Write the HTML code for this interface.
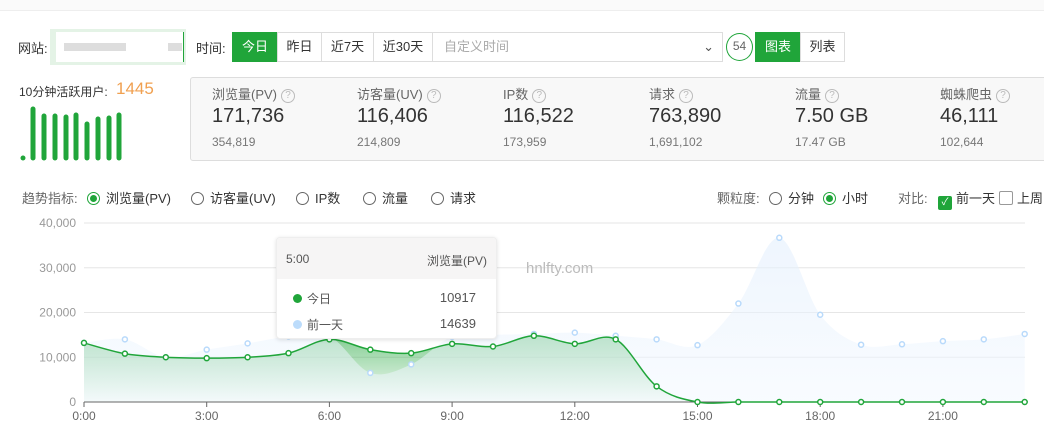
<!DOCTYPE html>
<html><head><meta charset="utf-8"><style>
*{margin:0;padding:0;box-sizing:border-box}
body{width:1044px;height:429px;overflow:hidden;background:#fff;font-family:"Liberation Sans","Noto Sans CJK SC",sans-serif;color:#333;position:relative;font-size:12px}
.a{position:absolute;white-space:nowrap}
.topline{position:absolute;left:0;top:0;width:1044px;height:11px;border-bottom:1px solid #eee;background:#fafafa}
.btn{position:absolute;top:32px;height:30px;border:1px solid #ddd;line-height:28px;text-align:center;font-size:13px;background:#fff}
.g{background:#20a53a;color:#fff;border-color:#20a53a}
.box{position:absolute;left:190px;top:77px;width:860px;height:84px;background:#f8f8f8;border:1px solid #ddd;border-radius:3px}
.st{position:absolute;top:0}
.st .t{position:absolute;top:6px;font-size:13px;color:#666;white-space:nowrap}
.st .v{position:absolute;top:27px;font-size:20px;color:#333;white-space:nowrap}
.st .s{position:absolute;top:57px;font-size:12px;color:#777;white-space:nowrap}
.q{display:inline-block;width:14px;height:14px;border:1px solid #bbb;border-radius:50%;font-size:10px;line-height:12px;text-align:center;color:#bbb;margin-left:4px;vertical-align:1px}
.r{display:inline-block;width:13px;height:13px;border:1px solid #666;border-radius:50%;vertical-align:-2px;margin-right:6px;position:relative}
.r.on{border-color:#20a53a}.r.on:after{content:"";position:absolute;left:2px;top:2px;width:7px;height:7px;border-radius:50%;background:#20a53a}
</style></head><body>
<div class="topline"></div>
<div class="a" style="left:18px;top:38px;font-size:13px">网站:</div>
<div class="a" style="left:50px;top:29px;width:136px;height:36px;background:#e4f3e6"></div>
<div class="a" style="left:56px;top:32px;width:128px;height:30px;background:#fff;border-right:1px solid #20a53a"></div>
<div class="a" style="left:64px;top:43px;width:62px;height:8px;background:#ddd"></div>
<div class="a" style="left:168px;top:43px;width:14px;height:8px;background:#ddd"></div>
<div class="a" style="left:196px;top:38px;font-size:13px">时间:</div>
<div class="btn g" style="left:232px;width:46px">今日</div>
<div class="btn" style="left:277px;width:45px">昨日</div>
<div class="btn" style="left:321px;width:53px">近7天</div>
<div class="btn" style="left:373px;width:60px">近30天</div>
<div class="btn" style="left:432px;width:291px;text-align:left;padding-left:11px;color:#aaa">自定义时间<span style="position:absolute;right:8px;top:0;color:#555">&#8964;</span></div>
<div class="a" style="left:726px;top:33px;width:27px;height:28px;border:1.5px solid #20a53a;border-radius:50%;text-align:center;line-height:25px;color:#666;font-size:12px">54</div>
<div class="btn g" style="left:755px;width:46px">图表</div>
<div class="btn" style="left:800px;width:45px">列表</div>

<div class="a" style="left:19px;top:83px;font-size:12px">10分钟活跃用户:</div>
<div class="a" style="left:116px;top:79px;font-size:17px;color:#f0a050">1445</div>
<svg class="a" style="left:18px;top:105px" width="110" height="60">
<g stroke="#20a53a" stroke-width="5" stroke-linecap="round">
<line x1="5" y1="53" x2="5" y2="53"/><line x1="15" y1="4" x2="15" y2="53"/><line x1="26" y1="11" x2="26" y2="53"/><line x1="37" y1="11" x2="37" y2="53"/><line x1="48" y1="12" x2="48" y2="53"/><line x1="58" y1="10" x2="58" y2="53"/><line x1="69" y1="19" x2="69" y2="53"/><line x1="80" y1="14" x2="80" y2="53"/><line x1="91" y1="13" x2="91" y2="53"/><line x1="101" y1="10" x2="101" y2="53"/>
</g></svg>

<div class="box">
<div class="st" style="left:21px"><div class="t">浏览量(PV)<span class="q">?</span></div><div class="v">171,736</div><div class="s">354,819</div></div>
<div class="st" style="left:166px"><div class="t">访客量(UV)<span class="q">?</span></div><div class="v">116,406</div><div class="s">214,809</div></div>
<div class="st" style="left:312px"><div class="t">IP数<span class="q">?</span></div><div class="v">116,522</div><div class="s">173,959</div></div>
<div class="st" style="left:458px"><div class="t">请求<span class="q">?</span></div><div class="v">763,890</div><div class="s">1,691,102</div></div>
<div class="st" style="left:604px"><div class="t">流量<span class="q">?</span></div><div class="v">7.50 GB</div><div class="s">17.47 GB</div></div>
<div class="st" style="left:749px"><div class="t">蜘蛛爬虫<span class="q">?</span></div><div class="v">46,111</div><div class="s">102,644</div></div>
</div>

<div class="a" style="left:22px;top:188px;color:#666;font-size:13px">趋势指标:</div>
<div class="a" style="left:87px;top:188px;font-size:13px"><span class="r on"></span>浏览量(PV)</div>
<div class="a" style="left:191px;top:188px;font-size:13px"><span class="r"></span>访客量(UV)</div>
<div class="a" style="left:296px;top:188px;font-size:13px"><span class="r"></span>IP数</div>
<div class="a" style="left:363px;top:188px;font-size:13px"><span class="r"></span>流量</div>
<div class="a" style="left:431px;top:188px;font-size:13px"><span class="r"></span>请求</div>
<div class="a" style="left:717px;top:188px;color:#666;font-size:13px">颗粒度:</div>
<div class="a" style="left:769px;top:188px;font-size:13px"><span class="r"></span>分钟</div>
<div class="a" style="left:823px;top:188px;font-size:13px"><span class="r on"></span>小时</div>
<div class="a" style="left:898px;top:188px;color:#666;font-size:13px">对比:</div>
<div class="a" style="left:938px;top:188px;font-size:13px"><span style="display:inline-block;width:14px;height:14px;background:#20a53a;border-radius:2px;color:#fff;font-size:10px;line-height:14px;text-align:center;vertical-align:-2px;margin-right:4px;position:relative;top:0">✓</span>前一天<span style="display:inline-block;width:14px;height:14px;border:1px solid #999;border-radius:2px;vertical-align:-2px;margin:0 4px"></span>上周同</div>

<svg id="ch" class="a" style="left:0;top:205px" width="1044" height="224"></svg>

<div class="a" style="left:526px;top:260px;font-size:15px;color:#bbb">hnlfty.com</div>
<div class="a" style="left:276px;top:237px;width:221px;height:102px;background:#fff;border:1px solid #eee;border-radius:4px;box-shadow:0 1px 4px rgba(0,0,0,.12);overflow:hidden">
<div style="height:41px;background:#f6f5f5;position:relative;font-size:12px;color:#555"><span style="position:absolute;left:9px;top:14px">5:00</span><span style="position:absolute;right:9px;top:14px">浏览量(PV)</span></div>
<div style="position:absolute;left:16px;top:52px;font-size:12px;color:#555"><span style="display:inline-block;width:9px;height:9px;border-radius:50%;background:#20a53a;margin-right:5px"></span>今日</div>
<div style="position:absolute;right:20px;top:52px;color:#555;font-size:13px">10917</div>
<div style="position:absolute;left:16px;top:78px;font-size:12px;color:#555"><span style="display:inline-block;width:9px;height:9px;border-radius:50%;background:#bcdcfb;margin-right:5px"></span>前一天</div>
<div style="position:absolute;right:20px;top:78px;color:#555;font-size:13px">14639</div>
</div>

<script>
var T=[13200,10800,10000,9800,10000,10917,14000,11700,10917,13000,12400,14800,13000,14000,3500,0,0,0,0,0,0,0,0,0];
var Y=[13200,14000,10000,11700,13100,14639,14700,6500,8400,14600,15000,15200,15500,14800,14000,12700,22000,36700,19500,12800,12900,13600,14000,15200];
var O=205;function X(i){return 84+i*40.9}function V(v){return 402-O-v*0.004475}
function path(a){var p=a.map(function(v,i){return[X(i),V(v)]});var d="M"+p[0];for(var i=0;i<p.length-1;i++){var p0=p[i-1]||p[i],p1=p[i],p2=p[i+1],p3=p[i+2]||p2;var c1=[p1[0]+(p2[0]-p0[0])/6,p1[1]+(p2[1]-p0[1])/6],c2=[p2[0]-(p3[0]-p1[0])/6,p2[1]-(p3[1]-p1[1])/6];d+="C"+c1+" "+c2+" "+p2}return d}
var s='<defs><linearGradient id="gg" x1="0" y1="0" x2="0" y2="1"><stop offset="0" stop-color="#20a53a" stop-opacity=".55"/><stop offset="1" stop-color="#20a53a" stop-opacity=".03"/></linearGradient><linearGradient id="bb" x1="0" y1="0" x2="0" y2="1"><stop offset="0" stop-color="#e3effd" stop-opacity=".6"/><stop offset="1" stop-color="#f2f8ff" stop-opacity=".5"/></linearGradient></defs>';
[0,10000,20000,30000,40000].forEach(function(v,k){var y=V(v);if(v)s+='<line x1="84" x2="1025" y1="'+y+'" y2="'+y+'" stroke="#e6e6e6"/>';s+='<text x="76" y="'+(y+4)+'" text-anchor="end" font-size="12" fill="#999">'+(v?(v/1000)+',000':'0')+'</text>'});
var b=V(0);
s+='<path d="'+path(T)+'L'+X(23)+','+b+'L84,'+b+'Z" fill="url(#gg)"/>';
s+='<path d="'+path(Y)+'L'+X(23)+','+b+'L84,'+b+'Z" fill="url(#bb)"/>';
s+='<line x1="84" x2="1026" y1="'+b+'" y2="'+b+'" stroke="#666"/>';
for(var h=0;h<24;h+=3){s+='<line x1="'+X(h)+'" x2="'+X(h)+'" y1="'+b+'" y2="'+(b+5)+'" stroke="#666"/><text x="'+X(h)+'" y="'+(b+18)+'" text-anchor="middle" font-size="12" fill="#666">'+h+':00</text>'}
s+='<path d="'+path(T)+'" fill="none" stroke="#20a53a" stroke-width="1.5"/>';
Y.forEach(function(v,i){s+='<circle cx="'+X(i)+'" cy="'+V(v)+'" r="2.5" fill="#fff" stroke="#b9dafb" stroke-width="1.5"/>'});
T.forEach(function(v,i){s+='<circle cx="'+X(i)+'" cy="'+V(v)+'" r="2.5" fill="#fff" stroke="#20a53a" stroke-width="1.5"/>'});
document.getElementById('ch').innerHTML=s;
</script>
</body></html>
